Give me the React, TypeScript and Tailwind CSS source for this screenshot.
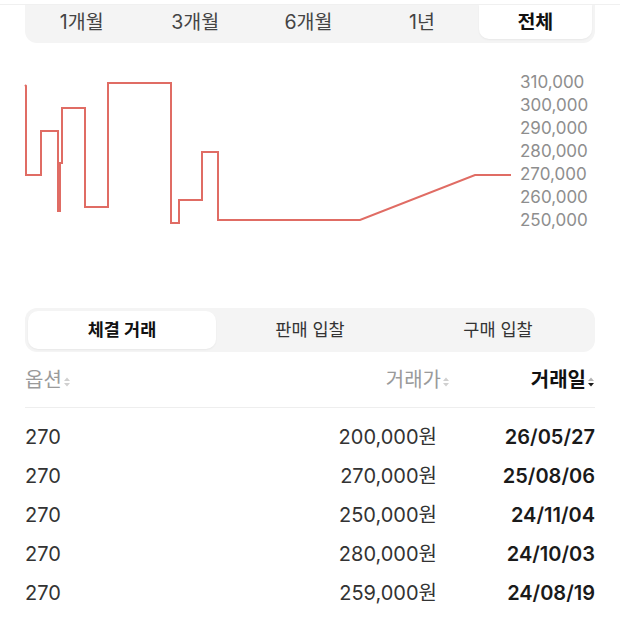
import React from 'react';

const periods = ['1개월', '3개월', '6개월', '1년', '전체'];
const tabs = ['체결 거래', '판매 입찰', '구매 입찰'];
const axis = ['310,000', '300,000', '290,000', '280,000', '270,000', '260,000', '250,000'];

const trades = [
  { option: '270', price: '200,000원', date: '26/05/27' },
  { option: '270', price: '270,000원', date: '25/08/06' },
  { option: '270', price: '250,000원', date: '24/11/04' },
  { option: '270', price: '280,000원', date: '24/10/03' },
  { option: '270', price: '259,000원', date: '24/08/19' },
];

// page coords, chart svg viewBox starts at y=60
const points =
  '25,85 26,86 26,175 41,175 41,131 58,131 58,211 60,211 60,163 62,163 62,108 85,108 85,207 108,207 108,83 171,83 171,223 179,223 179,200 202,200 202,152 218,152 218,220 360,220 475,175 511,175';

function SortIcon({ active = false }: { active?: boolean }) {
  return (
    <svg width="8" height="12" viewBox="0 0 8 12" className="ml-[1px] mt-[4px]">
      <polygon points="1,5 4,1.5 7,5" fill={active ? '#b5b5b5' : '#d0d0d0'} />
      <polygon points="1,7 4,10.5 7,7" fill={active ? '#1a1a1a' : '#d0d0d0'} />
    </svg>
  );
}

export default function App() {
  return (
    <div className="w-[620px] h-[620px] overflow-hidden bg-white font-[Inter,'Noto_Sans_CJK_KR',sans-serif] text-[#333]">
      <div className="h-[5px] border-b border-[#f0f0f0]" />

      {/* period selector */}
      <div className="mx-[25px] flex h-[38px] rounded-b-[12px] bg-[#f4f4f4] pr-[3px] pb-[4px]">
        {periods.map((p, i) => {
          const active = i === periods.length - 1;
          return (
            <div
              key={p}
              className={
                active
                  ? 'flex flex-1 items-center justify-center rounded-b-[10px] bg-white pt-[1px] text-[19.5px] font-bold text-[#111] shadow-[0_1px_2px_rgba(0,0,0,0.05)]'
                  : 'flex flex-1 items-center justify-center pt-[1px] text-[19.5px] text-[#444]'
              }
            >
              {p}
            </div>
          );
        })}
      </div>

      {/* chart */}
      <div className="flex h-[265px] items-start">
        <svg width="515" height="180" viewBox="0 60 515 180" className="mt-[17px] shrink-0">
          <polyline
            points={points}
            fill="none"
            stroke="#e06c64"
            strokeWidth="2"
            strokeLinejoin="miter"
          />
        </svg>
        <div className="ml-[5px] mt-[28px] flex flex-col text-[17px] leading-[23px] text-[#8e8e8e]">
          {axis.map((a) => (
            <span key={a}>{a}</span>
          ))}
        </div>
      </div>

      {/* tabs */}
      <div className="mx-[25px] flex h-[44px] rounded-[12px] bg-[#f4f4f4] p-[3px]">
        {tabs.map((t, i) => (
          <div
            key={t}
            className={
              i === 0
                ? 'flex flex-1 items-center justify-center rounded-[10px] bg-white text-[17.5px] font-bold text-[#111] shadow-[0_1px_2px_rgba(0,0,0,0.05)]'
                : 'flex flex-1 items-center justify-center text-[17.5px] text-[#333]'
            }
          >
            {t}
          </div>
        ))}
      </div>

      {/* table header */}
      <div className="mx-[25px] flex h-[56px] items-center border-b border-[#eeeeee] text-[20px]">
        <div className="flex flex-1 items-center text-[#9a9a9a]">
          옵션
          <SortIcon />
        </div>
        <div className="flex items-center text-[#9a9a9a]">
          거래가
          <SortIcon />
        </div>
        <div className="flex w-[145px] items-center justify-end font-bold text-[#111]">
          거래일
          <SortIcon active />
        </div>
      </div>

      {/* rows */}
      <div className="mx-[25px] pt-[10px]">
        {trades.map((t) => (
          <div key={t.date} className="flex h-[38.8px] items-center text-[20px]">
            <div className="flex-1 text-[#333]">{t.option}</div>
            <div className="pr-[13px] text-right text-[#333]">{t.price}</div>
            <div className="w-[145px] text-right font-semibold text-[#1a1a1a]">{t.date}</div>
          </div>
        ))}
      </div>
    </div>
  );
}
